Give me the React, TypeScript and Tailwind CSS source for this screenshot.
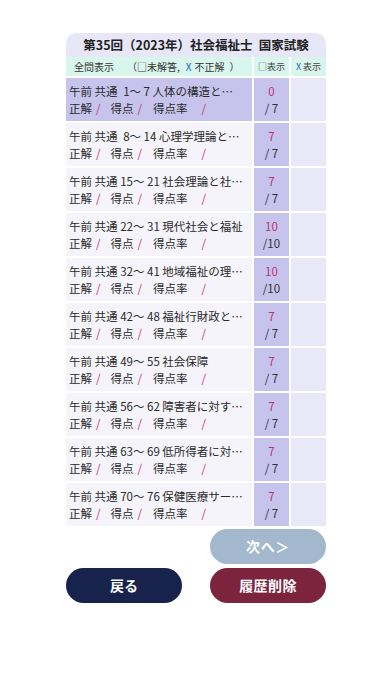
import React from 'react';

interface Row {
  range: string;
  pad?: boolean;
  title: string;
  score: string;
  total: string;
  active?: boolean;
}

const rows: Row[] = [
  { range: '1〜 7', pad: true, title: '人体の構造と…', score: '0', total: '/ 7', active: true },
  { range: '8〜 14', pad: true, title: '心理学理論と…', score: '7', total: '/ 7' },
  { range: '15〜 21', title: '社会理論と社…', score: '7', total: '/ 7' },
  { range: '22〜 31', title: '現代社会と福祉', score: '10', total: '/10' },
  { range: '32〜 41', title: '地域福祉の理…', score: '10', total: '/10' },
  { range: '42〜 48', title: '福祉行財政と…', score: '7', total: '/ 7' },
  { range: '49〜 55', title: '社会保障', score: '7', total: '/ 7' },
  { range: '56〜 62', title: '障害者に対す…', score: '7', total: '/ 7' },
  { range: '63〜 69', title: '低所得者に対…', score: '7', total: '/ 7' },
  { range: '70〜 76', title: '保健医療サー…', score: '7', total: '/ 7' },
];

const font = { fontFamily: '"Noto Sans CJK JP", "Noto Sans", sans-serif' };

function Slash({ className = '' }: { className?: string }) {
  return <span className={`text-[#c8337a] ${className}`}>/</span>;
}

export default function App() {
  return (
    <div className="min-h-[696px] w-[392px] bg-white text-[#222]" style={font}>
      <div className="pt-[33px] px-[66px]">
        <div className="w-[260px]">
          {/* Title */}
          <div className="h-[24px] rounded-t-[10px] bg-[#e7e7f7] flex items-center justify-center text-[12.5px] font-bold text-[#222]">
            <span>第35回（2023年）社会福祉士</span>
            <span className="ml-[6px]">国家試験</span>
          </div>

          {/* Header */}
          <div className="grid grid-cols-[186px_35px_35px] gap-x-[2px] bg-white">
            <div className="h-[19px] bg-[#d9f6ec] flex items-center pl-[8px] text-[10px] text-[#333]">
              <span>全問表示</span>
              <span className="ml-[13px]">（</span>
              <span>□未解答,</span>
              <span className="text-[#2563c9] ml-[6px]">X</span>
              <span className="ml-[3px]">不正解</span>
              <span className="ml-[5px]">）</span>
            </div>
            <div className="h-[19px] bg-[#d9f6ec] flex items-center justify-center text-[9px] text-[#444]">□表示</div>
            <div className="h-[19px] bg-[#d9f6ec] flex items-center justify-center text-[9px] text-[#444]">
              <span className="text-[#2563c9] mr-[2px]">X</span>表示
            </div>
          </div>

          {/* Rows */}
          <div className="mt-[2px] flex flex-col gap-y-[2px]">
            {rows.map((r, i) => (
              <div key={i} className="grid grid-cols-[186px_35px_35px] gap-x-[2px] h-[43px]">
                <div className={`${r.active ? 'bg-[#c6c3ec]' : 'bg-[#f4f4fa]'} pl-[3px] pt-[5px] text-[11.5px] leading-[17px] text-[#2a2a2a]`}>
                  <div className="whitespace-pre">
                    午前 共通 <span className={r.pad ? 'ml-[3px]' : ''}>{r.range}</span> {r.title}
                  </div>
                  <div className="flex items-baseline whitespace-pre">
                    <span>正解</span>
                    <Slash className="ml-[4px]" />
                    <span className="ml-[10px]">得点</span>
                    <Slash className="ml-[4px]" />
                    <span className="ml-[11px]">得点率</span>
                    <Slash className="ml-[14px]" />
                  </div>
                </div>
                <div className="bg-[#c6c3ec] flex flex-col items-center pt-[5px] text-[11.5px] leading-[17px]">
                  <div className="text-[#c0307a]">{r.score}</div>
                  <div className="text-[#333]">{r.total}</div>
                </div>
                <div className="bg-[#e9e8f8]" />
              </div>
            ))}
          </div>

          {/* Buttons */}
          <div className="mt-[3px] flex justify-end">
            <button className="w-[116px] h-[35px] rounded-full bg-[#a3b8cc] text-white text-[14px] font-bold tracking-[0.05em]">
              次へ＞
            </button>
          </div>
          <div className="mt-[4px] flex justify-between">
            <button className="w-[116px] h-[35px] rounded-full bg-[#17234d] text-white text-[14px] font-bold">
              戻る
            </button>
            <button className="w-[116px] h-[35px] rounded-full bg-[#7c233e] text-white text-[14px] font-bold tracking-[0.03em]">
              履歴削除
            </button>
          </div>
        </div>
      </div>
    </div>
  );
}
